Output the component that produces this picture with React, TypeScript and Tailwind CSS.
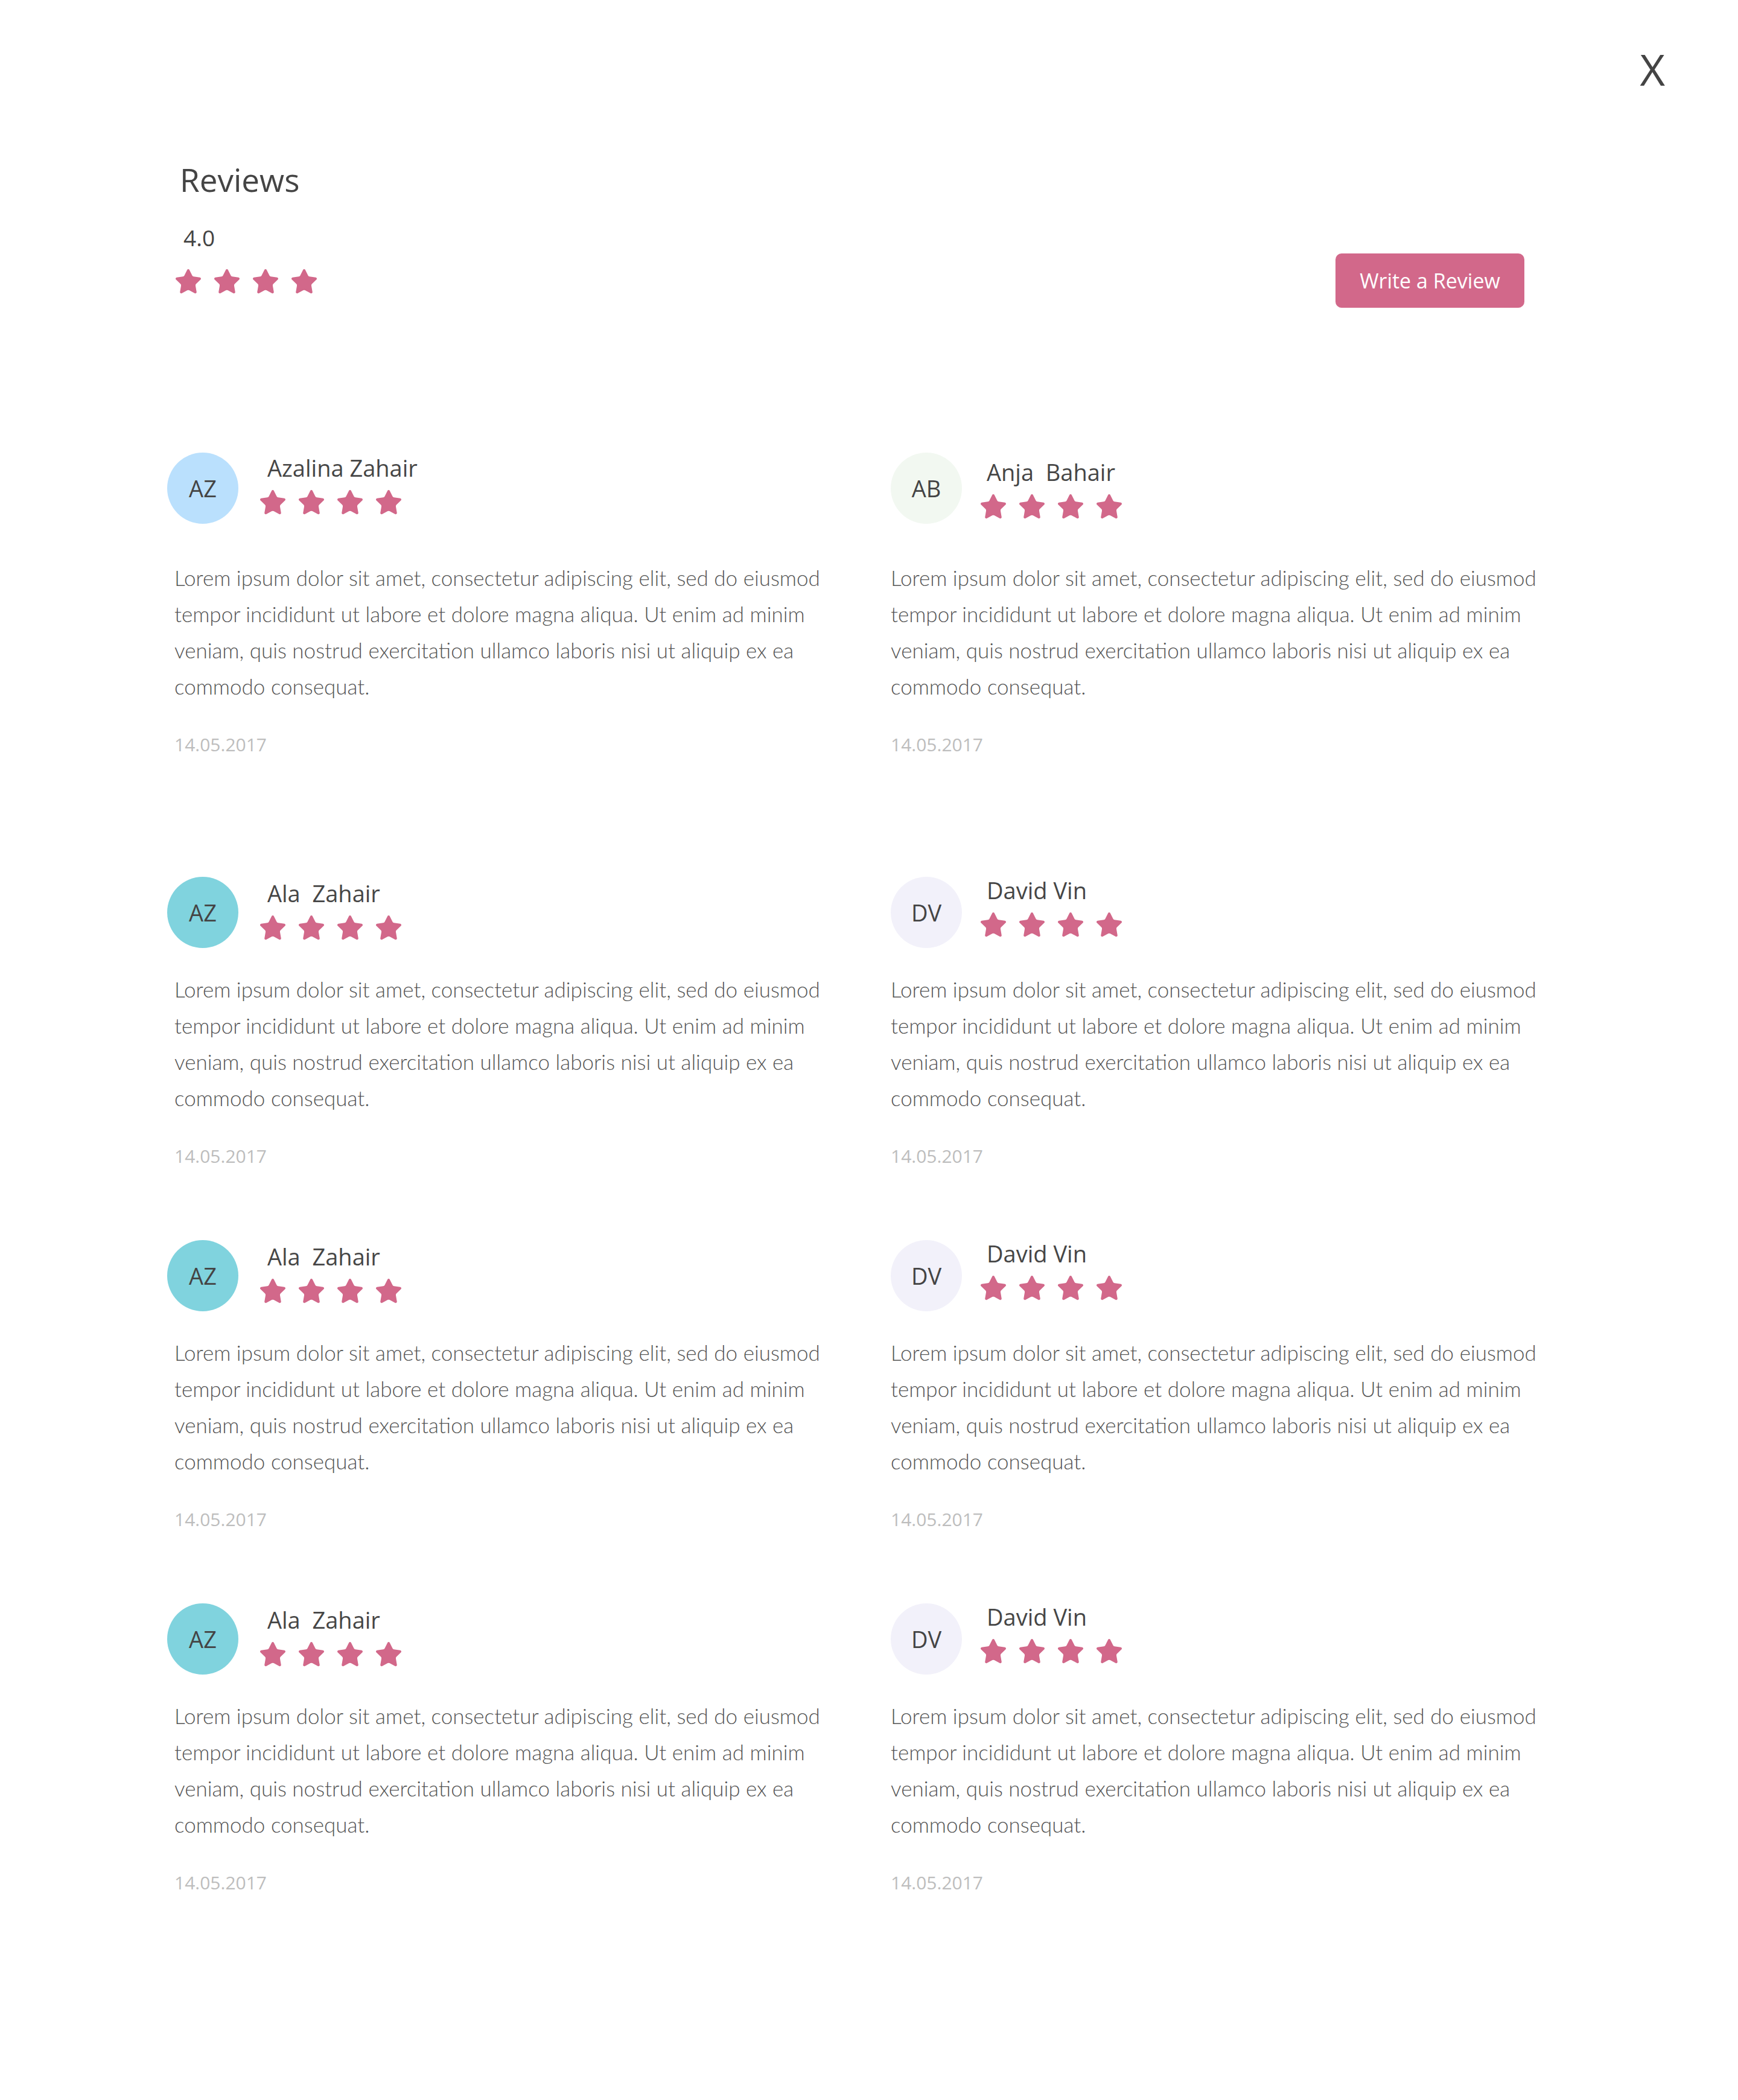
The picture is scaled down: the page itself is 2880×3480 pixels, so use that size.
import React from "react";

const LOREM =
  "Lorem ipsum dolor sit amet, consectetur adipiscing elit, sed do eiusmod tempor incididunt ut labore et dolore magna aliqua. Ut enim ad minim veniam, quis nostrud exercitation ullamco laboris nisi ut aliquip ex ea commodo consequat.";

type Review = {
  initials: string;
  name: string;
  avatar: string;
  nameTop: string;
};

const rows: Review[][] = [
  [
    { initials: "AZ", name: "Azalina Zahair", avatar: "bg-[#BAE0FD]", nameTop: "pt-[6px]" },
    { initials: "AB", name: "Anja  Bahair", avatar: "bg-[#F2F8F1]", nameTop: "pt-[13px]" },
  ],
  [
    { initials: "AZ", name: "Ala  Zahair", avatar: "bg-[#80D3DE]", nameTop: "pt-[8px]" },
    { initials: "DV", name: "David Vin", avatar: "bg-[#F2F1FA]", nameTop: "pt-[3px]" },
  ],
  [
    { initials: "AZ", name: "Ala  Zahair", avatar: "bg-[#80D3DE]", nameTop: "pt-[8px]" },
    { initials: "DV", name: "David Vin", avatar: "bg-[#F2F1FA]", nameTop: "pt-[3px]" },
  ],
  [
    { initials: "AZ", name: "Ala  Zahair", avatar: "bg-[#80D3DE]", nameTop: "pt-[8px]" },
    { initials: "DV", name: "David Vin", avatar: "bg-[#F2F1FA]", nameTop: "pt-[3px]" },
  ],
];

function Star() {
  return (
    <svg
      viewBox="0 0 24 24"
      className="h-12 w-12"
      fill="#D2688A"
      stroke="#D2688A"
      strokeWidth={1}
      strokeLinejoin="round"
    >
      <path d="M11.525 2.295a.53.53 0 0 1 .95 0l2.31 4.679a2.123 2.123 0 0 0 1.595 1.16l5.166.756a.53.53 0 0 1 .294.904l-3.736 3.638a2.123 2.123 0 0 0-.611 1.878l.882 5.14a.53.53 0 0 1-.771.56l-4.618-2.428a2.122 2.122 0 0 0-1.973 0L6.396 21.01a.53.53 0 0 1-.77-.56l.881-5.139a2.122 2.122 0 0 0-.611-1.879L2.16 9.795a.53.53 0 0 1 .294-.906l5.165-.755a2.122 2.122 0 0 0 1.597-1.16z" />
    </svg>
  );
}

function Stars() {
  return (
    <div className="flex gap-4">
      <Star />
      <Star />
      <Star />
      <Star />
    </div>
  );
}

function ReviewCard({ review, left, first }: { review: Review; left: boolean; first: boolean }) {
  return (
    <div className={first ? "pb-[80px]" : ""}>
      {/* avatar + name */}
      <div className="flex items-start">
        <div
          className={`flex h-[118px] w-[118px] shrink-0 items-center justify-center rounded-full text-[38px] text-[#444] ${review.avatar}`}
        >
          {review.initials}
        </div>
        <div className={`${left ? "ml-[33px]" : "ml-[28px]"} ${review.nameTop}`}>
          <p className={`whitespace-pre text-[38px] leading-none text-[#464646] ${left ? "ml-[15px]" : "ml-[13px]"}`}>
            {review.name}
          </p>
          <div className="mt-[15px]">
            <Stars />
          </div>
        </div>
      </div>

      <p
        className={`w-[1120px] font-['Lato',sans-serif] text-[35px] font-light leading-[60px] text-[#555] ${
          left ? "ml-[12px]" : "ml-0"
        } ${first ? "mt-[59px]" : "mt-[38px]"}`}
      >
        {LOREM}
      </p>

      <p className={`mt-[52px] text-[30px] leading-none text-[#bdbdbd] ${left ? "ml-[12px]" : "ml-0"}`}>
        14.05.2017
      </p>
    </div>
  );
}

export default function App() {
  return (
    <div className="min-h-[3480px] bg-white font-['Open_Sans',sans-serif] text-[#444]">
      <div className="flex justify-end pr-[121px] pt-[78px]">
        <button className="text-[72px] font-medium leading-none text-[#444]">X</button>
      </div>

      <div className="pl-[277px] pr-[354px]">
        {/* Header */}
        <div className="mt-[121px] flex items-start justify-between">
          <div>
            <h2 className="ml-[21px] text-[53px] leading-none text-[#444]">Reviews</h2>
            <p className="ml-[27px] mt-[51px] text-[37px] leading-none text-[#444]">4.0</p>
            <div className="ml-[11px] mt-[31px]">
              <Stars />
            </div>
          </div>
          <button className="mt-[149px] h-[90px] w-[313px] rounded-[10px] bg-[#D2688A] text-[34px] text-white">
            Write a Review
          </button>
        </div>

        {/* Reviews */}
        <div className="mt-[240px] grid grid-cols-[1199px_1fr] gap-y-[124px]">
          {rows.map((row, i) =>
            row.map((review, j) => (
              <ReviewCard key={`${i}-${j}`} review={review} left={j === 0} first={i === 0} />
            ))
          )}
        </div>
      </div>
    </div>
  );
}
